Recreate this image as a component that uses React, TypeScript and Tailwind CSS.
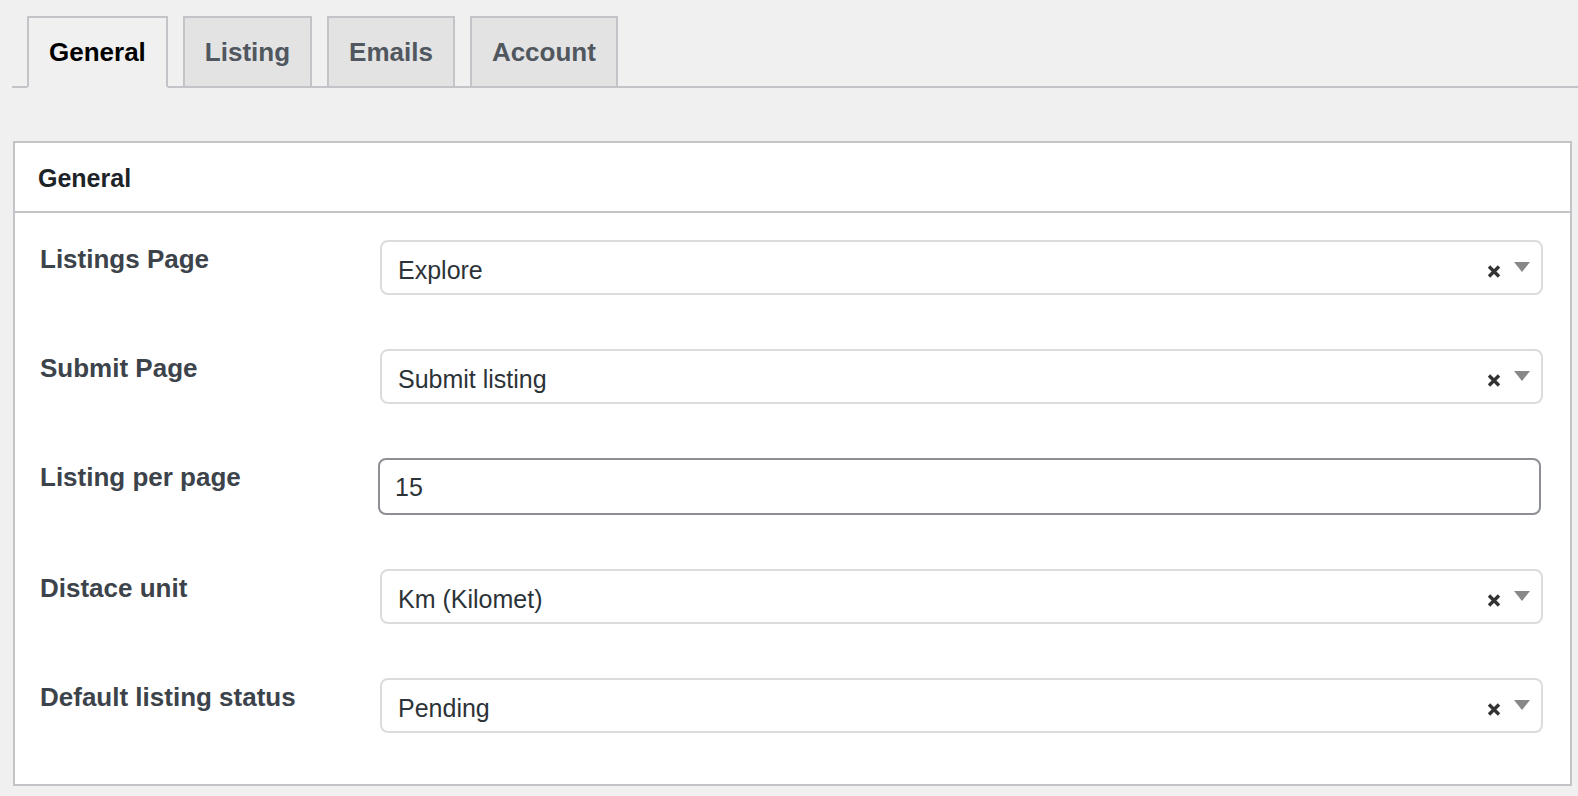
import React from "react";

const tabs = ["General", "Listing", "Emails", "Account"];

type Row = { label: string; value: string; kind: "select" | "input" };

const rows: Row[] = [
  { label: "Listings Page", value: "Explore", kind: "select" },
  { label: "Submit Page", value: "Submit listing", kind: "select" },
  { label: "Listing per page", value: "15", kind: "input" },
  { label: "Distace unit", value: "Km (Kilomet)", kind: "select" },
  { label: "Default listing status", value: "Pending", kind: "select" },
];

function ClearIcon() {
  return (
    <svg width="14" height="13" viewBox="0 0 14 13" className="mt-[7px]">
      <path d="M2 1.5 L12 11.5 M12 1.5 L2 11.5" stroke="#333333" strokeWidth="3.4" strokeLinecap="butt" />
    </svg>
  );
}

function Select({ value }: { value: string }) {
  return (
    <div className="flex h-[55px] items-center rounded-[8px] border-2 border-[#dcdcde] bg-white pl-[16px] pr-[11px]">
      <span className="flex-1 pt-[6px] text-[25px] text-[#2c3338]">{value}</span>
      <ClearIcon />
      {/* select2 arrow */}
      <div className="ml-[13px] mb-[2px] h-0 w-0 border-x-[8px] border-t-[10px] border-x-transparent border-t-[#888888]" />
    </div>
  );
}

function Input({ value }: { value: string }) {
  return (
    <div className="-ml-[2px] mr-[2px] flex h-[57px] items-center rounded-[8px] border-2 border-[#8c8f94] bg-white pl-[15px]">
      <span className="pt-[2px] text-[25px] text-[#2c3338]">{value}</span>
    </div>
  );
}

export default function App() {
  return (
    <div className="h-[796px] overflow-hidden bg-[#f0f0f1] pt-[16px] font-['Liberation_Sans',Arial,sans-serif]">
      <div className="ml-[12px] flex items-end border-b-2 border-[#c3c4c7] pl-[15px]">
        {tabs.map((t, i) => (
          <div
            key={t}
            className={
              i === 0
                ? "-mb-[2px] h-[72px] border-2 border-[#c3c4c7] border-b-[#f0f0f1] bg-[#f0f0f1] px-[20px] text-[26px] font-bold leading-[68px] text-black"
                : "ml-[15px] -mb-[2px] h-[72px] border-2 border-[#c3c4c7] bg-[#e3e3e4] px-[20px] text-[26px] font-bold leading-[68px] text-[#50575e]"
            }
          >
            {t}
          </div>
        ))}
      </div>

      <div className="ml-[13px] mr-[6px] mt-[53px] border-2 border-[#c3c4c7] bg-white">
        <div className="flex h-[70px] items-center border-b-2 border-[#c3c4c7] px-[23px] pt-[4px] text-[25px] font-bold text-[#1d2327]">
          General
        </div>
        <div className="flex flex-col gap-[54px] pb-[51px] pl-[25px] pr-[27px] pt-[27px]">
          {rows.map((r) => (
            <div key={r.label} className="flex items-start">
              <div className="w-[340px] pt-[2px] text-[26px] font-bold leading-[34px] text-[#3c434a]">{r.label}</div>
              <div className="flex-1">{r.kind === "select" ? <Select value={r.value} /> : <Input value={r.value} />}</div>
            </div>
          ))}
        </div>
      </div>
    </div>
  );
}
